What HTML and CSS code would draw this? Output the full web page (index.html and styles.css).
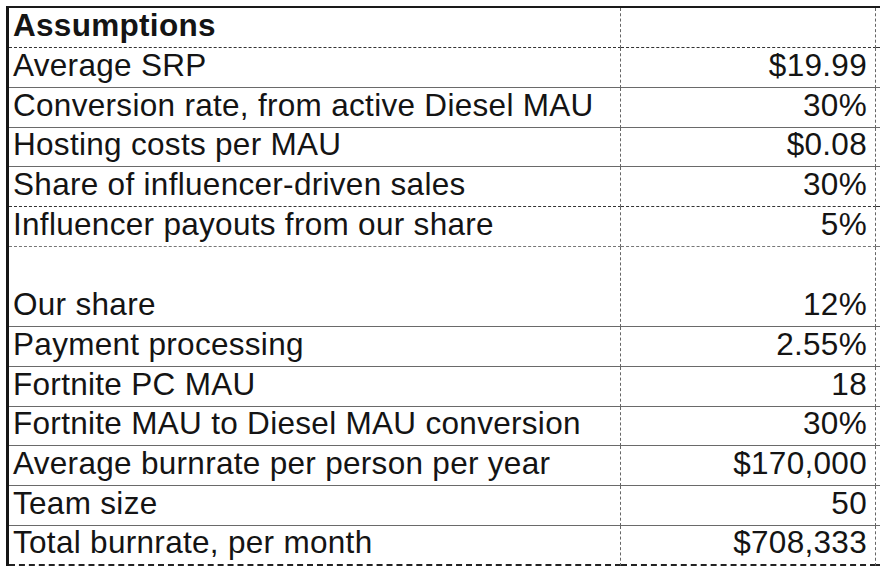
FILE: index.html
```html
<!DOCTYPE html>
<html lang="en">
<head>
<meta charset="utf-8">
<title>Assumptions</title>
<link rel="stylesheet" href="styles.css">
</head>
<body>
<div class="sheet">
  <div class="row line-dash">
    <div class="cell label bold">Assumptions</div><div class="cell value"></div><div class="cell edge"></div>
  </div>
  <div class="row line-solid">
    <div class="cell label">Average SRP</div><div class="cell value">$19.99</div><div class="cell edge"></div>
  </div>
  <div class="row line-solid">
    <div class="cell label">Conversion rate, from active Diesel MAU</div><div class="cell value">30%</div><div class="cell edge"></div>
  </div>
  <div class="row line-solid">
    <div class="cell label">Hosting costs per MAU</div><div class="cell value">$0.08</div><div class="cell edge"></div>
  </div>
  <div class="row line-dash">
    <div class="cell label">Share of influencer-driven sales</div><div class="cell value">30%</div><div class="cell edge"></div>
  </div>
  <div class="row line-dash-light">
    <div class="cell label">Influencer payouts from our share</div><div class="cell value">5%</div><div class="cell edge"></div>
  </div>
  <div class="row tall line-solid">
    <div class="cell label">Our share</div><div class="cell value">12%</div><div class="cell edge"></div>
  </div>
  <div class="row line-solid">
    <div class="cell label">Payment processing</div><div class="cell value">2.55%</div><div class="cell edge"></div>
  </div>
  <div class="row line-solid">
    <div class="cell label">Fortnite PC MAU</div><div class="cell value">18</div><div class="cell edge"></div>
  </div>
  <div class="row line-solid">
    <div class="cell label">Fortnite MAU to Diesel MAU conversion</div><div class="cell value">30%</div><div class="cell edge"></div>
  </div>
  <div class="row line-solid">
    <div class="cell label">Average burnrate per person per year</div><div class="cell value">$170,000</div><div class="cell edge"></div>
  </div>
  <div class="row line-solid">
    <div class="cell label">Team size</div><div class="cell value">50</div><div class="cell edge"></div>
  </div>
  <div class="row line-thick">
    <div class="cell label">Total burnrate, per month</div><div class="cell value">$708,333</div><div class="cell edge"></div>
  </div>
</div>
</body>
</html>
```
FILE: styles.css
```css
html, body {
  margin: 0;
  padding: 0;
  background: #ffffff;
}

body {
  width: 880px;
  height: 567px;
  overflow: hidden;
}

.sheet {
  margin: 6px 0 0 6px;
  width: 874px;
  display: flex;
  flex-direction: column;
  border-left: 3px solid #151515;
  border-top: 2px solid #1a1a1a;
  box-sizing: border-box;
  font-family: "Liberation Sans", Arial, sans-serif;
  font-size: 31.5px;
  letter-spacing: 0.3px;
  color: #141414;
}

.row {
  display: grid;
  grid-template-columns: 612px 255px 1fr;
  height: 39.86px;
  box-sizing: border-box;
}

.row.tall {
  height: 79.72px;
}

.cell {
  box-sizing: border-box;
  display: flex;
  align-items: flex-end;
  line-height: 30px;
  padding-bottom: 7px;
  white-space: nowrap;
  border-bottom: 1px solid #6e6e6e;
}

.label {
  padding-left: 4px;
  border-right: 1px dashed #666;
}

.value {
  justify-content: flex-end;
  padding-right: 8px;
  border-right: 1px dashed #666;
}

.bold {
  font-weight: bold;
}

.line-dash .cell {
  border-bottom: 1px dashed #333;
}

.line-dash-light .cell {
  border-bottom: 1px dashed #777;
}

.line-solid .cell {
  border-bottom: 1px solid #6a6a6a;
}

.line-thick .cell {
  border-bottom: 2px dashed #222;
}
```
